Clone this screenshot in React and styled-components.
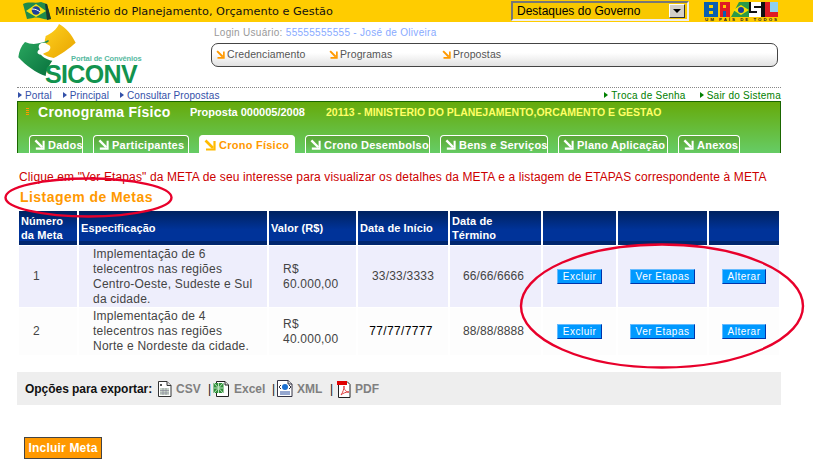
import React from 'react'
import styled, { createGlobalStyle } from 'styled-components'

const Global = createGlobalStyle`
  html, body { margin: 0; padding: 0; background: #fff; }
  body { font-family: "Liberation Sans", Arial, sans-serif; font-size: 12px; color: #444; }
  svg { flex-shrink: 0; }
`

const tabs = [
  { label: 'Dados', width: 54 },
  { label: 'Participantes', width: 96 },
  { label: 'Crono Físico', width: 96, active: true },
  { label: 'Crono Desembolso', width: 125 },
  { label: 'Bens e Serviços', width: 108 },
  { label: 'Plano Aplicação', width: 110 },
  { label: 'Anexos', width: 62 },
]

const metas = [
  { id: 1, spec: 'Implementação de 6 telecentros nas regiões Centro-Oeste, Sudeste e Sul da cidade.', valor: 'R$ 60.000,00', inicio: '33/33/3333', fim: '66/66/6666', height: 61 },
  { id: 2, spec: 'Implementação de 4 telecentros nas regiões Norte e Nordeste da cidade.', valor: 'R$ 40.000,00', inicio: '77/77/7777', fim: '88/88/8888', height: 47, dark: true },
]

function Flag() {
  return (
    <svg width="28" height="20" viewBox="0 0 28 20">
      <path d="M0 3 C6 0 12 3 18 1 L24 3 L28 18 C22 20 16 15 10 17 L4 18 Z" fill="#1f8a4c" />
      <path d="M22 3 L24 3 L28 18 L24 19 Z" fill="#1c3a2c" />
      <path d="M3 10 L13 3 L23 10 L13 16 Z" fill="#f4e31a" />
      <circle cx="13" cy="9.5" r="4.2" fill="#1d3f9a" />
      <path d="M9 8 C12 8 15 9 17 11" stroke="#fff" strokeWidth="1" fill="none" />
    </svg>
  )
}

function BrasilLogo() {
  return (
    <svg width="74" height="20" viewBox="0 0 74 20">
      <rect x="0" y="1" width="14" height="15" fill="#0a5fb0" />
      <rect x="5" y="4" width="4" height="3" fill="#f6d000" />
      <rect x="5" y="10" width="4" height="3" fill="#f6d000" />
      <rect x="16" y="1" width="10" height="15" fill="#e01b24" />
      <rect x="19" y="4" width="3" height="3" fill="#ffcc00" />
      <rect x="19" y="10" width="3" height="6" fill="#0a5fb0" />
      <path d="M27 16 L35 1 L45 1 L45 16 Z" fill="#2b9a48" />
      <path d="M29 9 L37 4 L45 9 L37 14 Z" fill="#f6e000" />
      <circle cx="37" cy="9" r="3" fill="#1d3f9a" />
      <rect x="45" y="1" width="12" height="15" fill="#111" />
      <path d="M47 1 H57 V5 H50 V7 H57 V16 H45 V12 H53 V10 H47 Z" fill="#fff" />
      <rect x="57" y="1" width="4" height="15" fill="#111" />
      <rect x="61" y="1" width="5" height="15" fill="#e01b24" />
      <rect x="66" y="1" width="8" height="10" fill="#8fd0f0" />
      <rect x="66" y="11" width="8" height="5" fill="#e01b24" />
      <text x="1" y="20" fontFamily="Liberation Sans" fontWeight="700" fontSize="4.4" textLength="72" fill="#222">UM PAÍS DE TODOS</text>
    </svg>
  )
}

function SiconvMark() {
  return (
    <LogoMark width="62" height="54" viewBox="0 6 186 162">
      <defs>
        <linearGradient id="gy" x1="0" y1="0" x2="1" y2="1">
          <stop offset="0" stopColor="#ffd21f" />
          <stop offset="1" stopColor="#e8a400" />
        </linearGradient>
        <linearGradient id="gg" x1="0" y1="0" x2="1" y2="1">
          <stop offset="0" stopColor="#2aa860" />
          <stop offset="1" stopColor="#08703c" />
        </linearGradient>
      </defs>
      <path d="M92 48 C110 40 125 28 132 12 C152 22 170 44 182 68 C165 84 136 104 116 114 C104 112 92 108 84 102 C92 96 104 96 106 84 C108 72 92 76 90 66 C88 58 92 54 92 48 Z" fill="url(#gy)" />
      <path d="M30 66 C52 76 76 72 100 60 C104 66 96 70 84 68 C72 68 68 80 74 88 C64 94 66 104 78 104 C84 112 100 120 112 122 C104 134 94 150 92 168 C64 160 32 136 10 112 C12 94 18 78 30 66 Z" fill="url(#gg)" />
    </LogoMark>
  )
}

function CornerArrow({ size = 12, color = '#fff' }) {
  return (
    <svg width={size} height={size} viewBox="0 0 12 12">
      <path d="M1.5 1.5 L9 9" stroke={color} strokeWidth="2.6" fill="none" />
      <path d="M10.5 2 V10.5 H2" stroke={color} strokeWidth="2.2" fill="none" />
    </svg>
  )
}

function CsvIcon() {
  return (
    <svg width="15" height="16" viewBox="0 0 15 16">
      <path d="M1.5 .5 H10 L14 4.5 V15.5 H1.5 Z" fill="#fff" stroke="#333" />
      <path d="M10 .5 V4.5 H14" fill="#ddd" stroke="#333" />
      <rect x="3" y="7" width="9" height="7" fill="#c8d4c8" />
      <path d="M3 9.5 H12 M3 12 H12 M6 7 V14 M9 7 V14" stroke="#889" strokeWidth=".7" />
      <rect x="3" y="3" width="2" height="2" fill="#555" />
    </svg>
  )
}

function ExcelIcon() {
  return (
    <svg width="17" height="17" viewBox="0 0 17 17">
      <path d="M3.5 1.5 H12 L15.5 5 V16.5 H3.5 Z" fill="#fff" stroke="#222" />
      <path d="M12 1.5 V5 H15.5" fill="#ddd" stroke="#222" />
      <rect x="0.5" y="3" width="10" height="10" fill="#2f8f3a" />
      <path d="M1 3 L10 13 M10 3 L1 13 M1 8 H10 M5.5 3 V13" stroke="#bfe5c0" strokeWidth="1" />
    </svg>
  )
}

function XmlIcon() {
  return (
    <svg width="16" height="17" viewBox="0 0 16 17">
      <path d="M.5 .5 H11 L15 4 V16.5 H.5 Z" fill="#fff" stroke="#334" />
      <path d="M11 .5 V4 H15" fill="#ddd" stroke="#334" />
      <circle cx="8" cy="7" r="3" fill="#1a6fd0" />
      <path d="M2 7 L4 5 M2 7 L4 9 M14 7 L12 5 M14 7 L12 9" stroke="#334" />
      <path d="M3 12 H13 M3 14 H13" stroke="#2a4fa0" />
    </svg>
  )
}

function PdfIcon() {
  return (
    <svg width="14" height="18" viewBox="0 0 14 18">
      <path d="M1.5 1.5 H10 L13 4.5 V17.5 H1.5 Z" fill="#fff" stroke="#222" />
      <rect x="0" y="1" width="10" height="4" fill="#e00000" />
      <path d="M4 15 C6 12 7 9 7 6 C7 10 9 12 12 12 C9 12 6 13 4 15 Z" fill="none" stroke="#e04040" />
    </svg>
  )
}

function App() {
  return (
    <Page>
      <Global />
      <TopBar>
        <Flag />
        <TopTitle>Ministério do Planejamento, Orçamento e Gestão</TopTitle>
        <GovSelect>
          <span>Destaques do Governo</span>
          <SelectButton />
        </GovSelect>
        <BrasilLogo />
      </TopBar>

      <Header>
        <Logo>
          <SiconvMark />
          <LogoPortal>Portal de Convênios</LogoPortal>
          <LogoName>SICONV</LogoName>
        </Logo>
        <HeaderRight>
          <Login>Login Usuário: <LoginUser>55555555555 - José de Oliveira</LoginUser></Login>
          <Menu>
            <MenuItem $width={113}><CornerArrow size={9} color="#f90" />Credenciamento</MenuItem>
            <MenuItem $width={113}><CornerArrow size={9} color="#f90" />Programas</MenuItem>
            <MenuItem><CornerArrow size={9} color="#f90" />Propostas</MenuItem>
          </Menu>
        </HeaderRight>
      </Header>

      <Crumbs>
        <CrumbGroup $gap={10}>
          <Crumb>Portal</Crumb>
          <Crumb>Principal</Crumb>
          <Crumb>Consultar Propostas</Crumb>
        </CrumbGroup>
        <CrumbGroup $gap={13}>
          <Crumb $green>Troca de Senha</Crumb>
          <Crumb $green>Sair do Sistema</Crumb>
        </CrumbGroup>
      </Crumbs>

      <Panel>
        <PanelHead>
          <PanelMark />
          <PanelTitle>Cronograma Físico</PanelTitle>
          <Proposta>Proposta 000005/2008</Proposta>
          <Orgao>20113 - MINISTERIO DO PLANEJAMENTO,ORCAMENTO E GESTAO</Orgao>
        </PanelHead>
        <Tabs>
          {tabs.map((t) => (
            <Tab key={t.label} $active={t.active} $width={t.width}>
              <CornerArrow size={t.active ? 12 : 11} color={t.active ? '#fb0' : '#fff'} />
              {t.label}
            </Tab>
          ))}
        </Tabs>
      </Panel>

      <Note>Clique em "Ver Etapas" da META de seu interesse para visualizar os detalhes da META e a listagem de ETAPAS correspondente à META</Note>
      <SectionTitle>Listagem de Metas</SectionTitle>

      <Table>
        <colgroup>
          {[58, 188, 87, 90, 91, 73, 89, 70].map((w, i) => <col key={i} width={w} />)}
        </colgroup>
        <thead>
          <tr>
            <Th>Número da Meta</Th>
            <Th>Especificação</Th>
            <Th>Valor (R$)</Th>
            <Th>Data de Início</Th>
            <Th $wrap>Data de Término</Th>
            <Th />
            <Th />
            <Th />
          </tr>
        </thead>
        <tbody>
          {metas.map((m, i) => (
            <Row key={m.id} $odd={i === 0} $height={m.height}>
              <IdCell>{m.id}</IdCell>
              <SpecCell>{m.spec}</SpecCell>
              <ValueCell>{m.valor}</ValueCell>
              <DateCell $dark={m.dark}>{m.inicio}</DateCell>
              <EndDateCell>{m.fim}</EndDateCell>
              <ActionCell><ActionButton>Excluir</ActionButton></ActionCell>
              <ActionCell><ActionButton>Ver Etapas</ActionButton></ActionCell>
              <ActionCell><ActionButton>Alterar</ActionButton></ActionCell>
            </Row>
          ))}
        </tbody>
      </Table>

      <ExportBar>
        <ExportLabel>Opções para exportar:</ExportLabel>
        <ExportItem $width={51}><CsvIcon /><ExportLink>CSV</ExportLink></ExportItem>
        <Sep>|</Sep>
        <ExportItem $width={59}><ExcelIcon /><ExportLink>Excel</ExportLink></ExportItem>
        <Sep>|</Sep>
        <ExportItem $width={53}><XmlIcon /><ExportLink>XML</ExportLink></ExportItem>
        <Sep>|</Sep>
        <PdfItem><PdfIcon /><ExportLink>PDF</ExportLink></PdfItem>
      </ExportBar>

      <IncluirButton>Incluir Meta</IncluirButton>

      <Marks width="813" height="464" viewBox="0 0 813 464">
        <ellipse cx="88.5" cy="197.5" rx="83" ry="19" />
        <ellipse cx="662" cy="306" rx="141" ry="61.5" />
      </Marks>
    </Page>
  )
}

const Page = styled.div`
  position: relative;
  width: 813px;
  height: 464px;
  overflow: hidden;
`

const TopBar = styled.div`
  display: flex;
  align-items: center;
  height: 22px;
  padding-left: 23px;
  background: #ffcc00;
`

const TopTitle = styled.div`
  width: 456px;
  margin-left: 4px;
  font-family: "DejaVu Sans", sans-serif;
  font-size: 11.3px;
  color: #111;
`

const GovSelect = styled.div`
  box-sizing: border-box;
  width: 178px;
  height: 20px;
  margin-right: 15px;
  display: flex;
  align-items: center;
  justify-content: space-between;
  padding: 0 2px 0 4px;
  background: #f8c800;
  border: 2px solid;
  border-color: #777 #eee #eee #777;
  font-size: 12px;
  color: #000;
`

const SelectButton = styled.div`
  position: relative;
  width: 16px;
  height: 14px;
  background: #d4d0c8;
  border: 1px solid;
  border-color: #fff #333 #333 #fff;
  box-sizing: border-box;

  &::after {
    content: '';
    position: absolute;
    left: 3px;
    top: 4px;
    border-left: 4px solid transparent;
    border-right: 4px solid transparent;
    border-top: 4px solid #000;
  }
`

const Header = styled.div`
  display: flex;
  align-items: flex-start;
  height: 65px;
  padding-left: 15px;
`

const Logo = styled.div`
  position: relative;
  box-sizing: border-box;
  display: flex;
  flex-direction: column;
  align-items: flex-start;
  width: 130px;
  height: 63px;
  padding: 32px 0 0 30px;
`

const LogoMark = styled.svg`
  position: absolute;
  left: 0;
  top: 0;
`

const LogoPortal = styled.div`
  position: relative;
  margin-left: 26px;
  height: 10px;
  font-size: 7.5px;
  font-weight: 700;
  line-height: 9px;
  letter-spacing: -0.1px;
  color: #55b9a0;
  white-space: nowrap;
`

const LogoName = styled.div`
  position: relative;
  height: 21px;
  font-size: 25px;
  font-weight: 700;
  line-height: 21px;
  letter-spacing: -0.65px;
  color: #12934e;
`

const HeaderRight = styled.div`
  margin-left: 66px;
  padding-top: 4px;
  display: flex;
  flex-direction: column;
`

const Login = styled.div`
  padding-left: 3px;
  height: 17px;
  font-size: 10px;
  line-height: 13px;
  letter-spacing: 0.3px;
  color: #999;
`

const LoginUser = styled.span`
  color: #88aaff;
`

const Menu = styled.div`
  box-sizing: border-box;
  display: flex;
  align-items: center;
  width: 567px;
  height: 24px;
  padding: 0 0 2px 4px;
  border: 1px solid #444;
  border-radius: 7px;
  background: linear-gradient(#ffffff 40%, #e2e2e2);
`

const MenuItem = styled.div`
  display: flex;
  align-items: center;
  gap: 2px;
  width: ${(p) => (p.$width ? `${p.$width}px` : 'auto')};
  font-size: 10.5px;
  letter-spacing: 0.1px;
  color: #555;
`

const Crumbs = styled.div`
  box-sizing: border-box;
  display: flex;
  justify-content: space-between;
  width: 764px;
  height: 14px;
  margin-left: 17px;
  border-top: 1px dotted #888;
`

const CrumbGroup = styled.div`
  display: flex;
  gap: ${(p) => p.$gap}px;
`

const Crumb = styled.div`
  position: relative;
  padding-left: 8px;
  font-size: 10px;
  line-height: 15px;
  letter-spacing: ${(p) => (p.$green ? '0.25px' : '0.1px')};
  color: ${(p) => (p.$green ? '#008000' : '#3350a8')};
  white-space: nowrap;

  &::before {
    content: '';
    position: absolute;
    left: 1px;
    top: 4px;
    border-top: 3px solid transparent;
    border-bottom: 3px solid transparent;
    border-left: 4px solid ${(p) => (p.$green ? '#008000' : '#3350a8')};
  }
`

const Panel = styled.div`
  box-sizing: border-box;
  width: 764px;
  height: 52px;
  margin-left: 17px;
  border: 1px solid #1a6600;
  border-bottom: 0;
  background: linear-gradient(#66aa0a, #66cc66);
  display: flex;
  flex-direction: column;
  justify-content: space-between;
`

const PanelHead = styled.div`
  display: flex;
  align-items: center;
  height: 18px;
  padding: 0 0 0 8px;
  margin-top: 1px;
  white-space: nowrap;
`

const PanelMark = styled.div`
  width: 3px;
  height: 8px;
  margin-right: 9px;
  background: repeating-linear-gradient(#ff9900 0 1px, transparent 1px 2px);
`

const PanelTitle = styled.div`
  width: 152px;
  font-size: 14px;
  font-weight: 700;
  letter-spacing: 0.3px;
  color: #fff;
`

const Proposta = styled.div`
  width: 136px;
  font-size: 11px;
  font-weight: 700;
  color: #fff;
`

const Orgao = styled.div`
  font-size: 10.5px;
  font-weight: 700;
  color: #ffff66;
`

const Tabs = styled.div`
  display: flex;
  gap: 10px;
  padding-left: 11px;
  height: 18px;
`

const Tab = styled.div`
  box-sizing: border-box;
  display: flex;
  align-items: center;
  gap: 3px;
  width: ${(p) => p.$width}px;
  padding-left: 4px;
  border: 1px solid #fff;
  border-bottom: 0;
  border-radius: 4px 4px 0 0;
  background: ${(p) => (p.$active ? '#fff' : 'linear-gradient(#5aa83a, transparent)')};
  font-size: 11px;
  font-weight: 700;
  letter-spacing: 0.25px;
  color: ${(p) => (p.$active ? '#ff9900' : '#fff')};
  white-space: nowrap;
`

const Note = styled.div`
  margin: 17px 0 0 19px;
  height: 14px;
  font-size: 12px;
  line-height: 14px;
  letter-spacing: 0.13px;
  color: #cc0000;
  white-space: nowrap;
`

const SectionTitle = styled.div`
  margin: 5px 0 0 20px;
  height: 16px;
  font-size: 14px;
  font-weight: 700;
  line-height: 16px;
  letter-spacing: 0.45px;
  color: #ff9900;
`

const Table = styled.table`
  table-layout: fixed;
  width: 764px;
  margin: 5px 0 0 17px;
  border-collapse: separate;
  border-spacing: 2px 1px;
`

const Th = styled.th`
  height: 34px;
  padding: 0 ${(p) => (p.$wrap ? '30px' : '0')} 0 2px;
  background: linear-gradient(#00225f, #003399 55%, #003399 88%, #00266e 88%);
  font-size: 11px;
  font-weight: 700;
  line-height: 14px;
  letter-spacing: 0.1px;
  color: #fff;
  text-align: left;
`

const Row = styled.tr`
  height: ${(p) => p.$height}px;
  background: ${(p) => (p.$odd ? '#eeeefc' : '#fdfdfd')};
`

const Td = styled.td`
  padding: 0;
  font-size: 12px;
  line-height: 15px;
  letter-spacing: 0.22px;
  color: #444;
`

const IdCell = styled(Td)`
  padding-left: 14px;
`

const SpecCell = styled(Td)`
  padding: 0 14px;
`

const ValueCell = styled(Td)`
  padding: 0 10px 0 14px;
`

const DateCell = styled(Td)`
  padding-right: ${(p) => (p.$dark ? '4px' : '0')};
  text-align: center;
  letter-spacing: ${(p) => (p.$dark ? '0.35px' : '0.2px')};
  color: ${(p) => (p.$dark ? '#000' : '#444')};
`

const EndDateCell = styled(Td)`
  padding-right: 4px;
  text-align: center;
  letter-spacing: 0.1px;
`

const ActionCell = styled(Td)`
  text-align: center;
`

const ActionButton = styled.button`
  box-sizing: border-box;
  height: 15px;
  padding: 0 5px;
  border: 1px solid;
  border-color: #66bbff #0033aa #0033aa #66bbff;
  background: #0099ff;
  font-family: "Liberation Sans", sans-serif;
  font-size: 10px;
  letter-spacing: 0.5px;
  color: #fff;
  line-height: 12px;
`

const ExportBar = styled.div`
  box-sizing: border-box;
  display: flex;
  align-items: center;
  width: 764px;
  height: 33px;
  margin: 16px 0 0 17px;
  padding-left: 8px;
  background: #eeeeee;
`

const ExportLabel = styled.div`
  width: 132px;
  font-size: 12px;
  font-weight: 700;
  letter-spacing: -0.04px;
  color: #111;
`

const ExportItem = styled.div`
  display: flex;
  align-items: center;
  gap: 4px;
  width: ${(p) => p.$width}px;
`

const PdfItem = styled.div`
  display: flex;
  align-items: center;
  gap: 4px;
  margin-left: 2px;
`

const ExportLink = styled.span`
  font-size: 12px;
  font-weight: 700;
  color: #808080;
`

const Sep = styled.span`
  width: 5px;
  font-size: 12px;
  color: #111;
`

const IncluirButton = styled.button`
  display: block;
  box-sizing: border-box;
  width: 78px;
  height: 22px;
  margin: 32px 0 0 24px;
  padding: 0;
  border: 1px solid #444;
  background: #ff9900;
  font-family: "Liberation Sans", sans-serif;
  font-size: 12px;
  font-weight: 700;
  letter-spacing: 0.2px;
  color: #fff;
`

const Marks = styled.svg`
  position: absolute;
  left: 0;
  top: 0;
  pointer-events: none;

  ellipse {
    fill: none;
    stroke: #e8002b;
    stroke-width: 2.4;
  }
`

export default App
